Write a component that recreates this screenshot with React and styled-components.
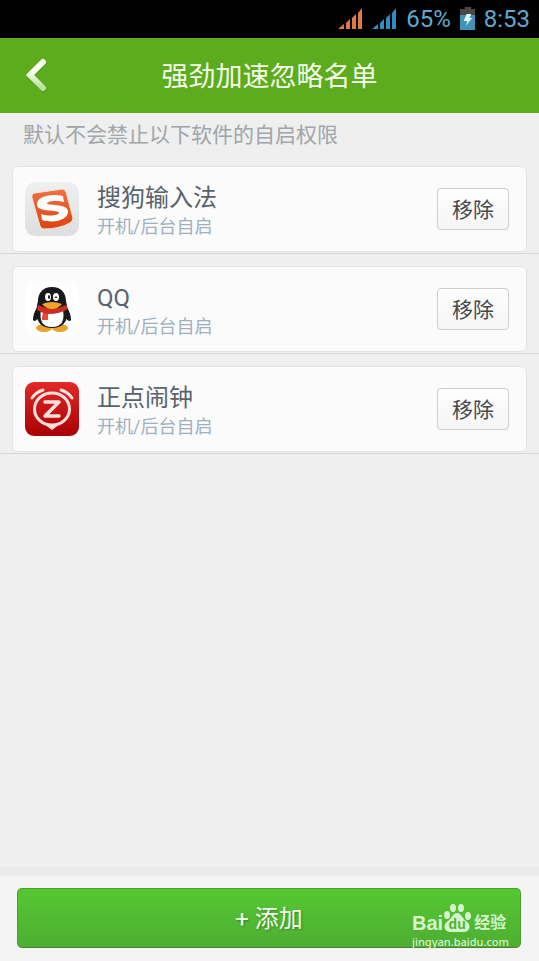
import React, { useState } from 'react'
import styled, { createGlobalStyle } from 'styled-components';

const GlobalStyle = createGlobalStyle`
  * {
    box-sizing: border-box;
  }
  body {
    margin: 0;
    background: #efefef;
    font-family: Roboto, "Noto Sans CJK SC", sans-serif;
  }
  button {
    font-family: inherit;
    cursor: pointer;
  }
`
const Page = styled.div`
  display: flex;
  flex-direction: column;
  min-height: 100vh;
`
const StatusBar = styled.div`
  display: flex;
  align-items: center;
  justify-content: flex-end;
  gap: 9px;
  height: 38px;
  padding-right: 9px;
  background: #000;
  color: #5fa9d0;
  font-size: 24px;
  line-height: 38px;
`
const Header = styled.header`
  display: grid;
  grid-template-columns: 72px 1fr 72px;
  align-items: center;
  height: 75px;
  background: #5cac1e;
`
const BackButton = styled.button`
  display: flex;
  align-items: center;
  justify-content: center;
  height: 75px;
  padding: 0;
  border: 0;
  background: none;
`
const Title = styled.h1`
  margin: 0;
  padding-top: 2px;
  color: #f6ffe9;
  font-size: 27px;
  font-weight: 400;
  line-height: 42px;
  text-align: center;
`
const Main = styled.main`
  flex: 1;
  border-top: 1px solid #f4f8ef;
`
const Hint = styled.p`
  height: 40px;
  margin: 0;
  padding: 6px 23px;
  color: #a0a5aa;
  font-size: 21px;
  line-height: 30px;
`
const List = styled.ul`
  margin: 0;
  padding: 0;
  list-style: none;
`
const Row = styled.li`
  padding: 12px 12px 1px;
  border-bottom: 1px solid #d6d8da;
`
const Card = styled.div`
  display: flex;
  align-items: center;
  height: 86px;
  padding: 0 17px 0 12px;
  border: 1px solid #e3e4e6;
  border-radius: 6px;
  background: #fbfbfb;
`
const AppIcon = styled.svg`
  flex: none;
  width: 54px;
  height: 54px;
`
const Info = styled.div`
  flex: 1;
  padding: 3px 0 0 18px;
`
const Name = styled.div`
  color: #59636d;
  font-size: 24px;
  line-height: 32px;
`
const Detail = styled.div`
  color: #a0afbe;
  font-size: 18px;
  line-height: 26px;
`
const RemoveButton = styled.button`
  width: 72px;
  height: 42px;
  padding: 2px 0 0;
  border: 1px solid #ccced0;
  border-radius: 4px;
  background: linear-gradient(#fefefe, #f5f5f6);
  color: #45484c;
  font-size: 21px;
  line-height: 30px;
`
const Footer = styled.footer`
  position: relative;
  padding: 12px 18px 13px 17px;
  background: #f4f4f4;
  box-shadow: 0 -9px 0 #eaeaea;
`
const AddButton = styled.button`
  display: block;
  width: 100%;
  height: 60px;
  padding: 2px 0 0;
  border: 1px solid #47a02b;
  border-bottom-color: #43842f;
  border-radius: 5px;
  background: linear-gradient(#56c733, #4eae31);
  color: #f3ffe9;
  font-size: 24px;
  line-height: 36px;
  text-shadow: 1px 1px 2px #39802a;
`
const Watermark = styled.div`
  position: absolute;
  right: 30px;
  bottom: 12px;
  color: #d5f3cb;
  pointer-events: none;
`
const Brand = styled.div`
  display: flex;
  align-items: flex-end;
  font-family: "Liberation Sans", "Noto Sans CJK SC", sans-serif;
  font-size: 20px;
  font-weight: 700;
  line-height: 20px;
`
const BrandCn = styled.span`
  padding-left: 3px;
  font-size: 16px;
`
const Paw = styled.span`
  position: relative;
  width: 28px;
  height: 30px;
`
const Du = styled.span`
  position: absolute;
  right: 0;
  bottom: 0;
  left: 0;
  color: #50b432;
  font-size: 14px;
  line-height: 18px;
  text-align: center;
`
const Site = styled.div`
  padding-top: 2px;
  font-family: "Noto Sans", sans-serif;
  font-size: 11px;
  font-weight: 500;
  line-height: 14px;
`

const Signal = ({ color }) => (
  <svg width="25" height="24" viewBox="0 0 25 24" fill={color} aria-hidden="true">
    <path d="M0 22l6-5v5zM8 22v-6l4-4v10zM14 22V11l4-4v15zM20 22V6l4-5v21z" />
  </svg>
)

const Battery = () => (
  <svg width="15" height="24" viewBox="0 0 16 24" preserveAspectRatio="none" aria-hidden="true">
    <path d="M5 0h7v2h4v6H0V2h5z" fill="#4b4748" />
    <path d="M0 8h16v15H0z" fill="#3d94b7" />
    <path d="M7 7h5l-2 4h3l-7 8 2-5H4z" fill="#e9fbff" />
  </svg>
)

const BackIcon = () => (
  <svg width="22" height="36" viewBox="0 0 22 36" fill="none" aria-hidden="true">
    <defs>
      <linearGradient id="back" x1="0" y1="0" x2="0" y2="1">
        <stop offset="0.35" stopColor="#fbfff5" />
        <stop offset="1" stopColor="#b9df9a" />
      </linearGradient>
    </defs>
    <path d="M19 5L5 18l14 14" stroke="#468c16" strokeWidth="6" strokeLinecap="round" opacity="0.4" />
    <path d="M18 4L5 17l13 13" stroke="url(#back)" strokeWidth="6" strokeLinecap="round" />
  </svg>
)

const SogouIcon = () => (
  <AppIcon viewBox="0 0 54 54" aria-hidden="true">
    <defs>
      <linearGradient id="sogouBg" x1="0" y1="0" x2="0" y2="1">
        <stop offset="0" stopColor="#eff0f1" />
        <stop offset="1" stopColor="#dcdee0" />
      </linearGradient>
      <linearGradient id="sogou" x1="0" y1="0" x2="0" y2="1">
        <stop offset="0" stopColor="#ef7340" />
        <stop offset="1" stopColor="#dc4312" />
      </linearGradient>
    </defs>
    <rect width="54" height="54" rx="10" fill="url(#sogouBg)" />
    <path d="M10 11L37 7q3 0 4 3l7 26q0 3-3 5-11 6-26 6-3 0-4-3L7 16q-1-4 3-5z" fill="url(#sogou)" stroke="#f9e1d8" strokeWidth="1" />
    <path
      d="M38 14l1 6c-8-2-16-1-17 1-1 3 20 0 21 8 1 8-13 13-26 9l-1-6c9 3 18 1 18-1 0-4-21 0-22-8-1-8 13-12 26-9z"
      fill="#fff"
    />
  </AppIcon>
)

const QQIcon = () => (
  <AppIcon viewBox="0 0 54 54" aria-hidden="true">
    <rect width="54" height="54" rx="10" fill="#fefefe" />
    <ellipse cx="19" cy="46" rx="8" ry="4" fill="#eba229" />
    <ellipse cx="35" cy="46" rx="8" ry="4" fill="#eba229" />
    <path d="M13 24q-5 7-5 14 2 3 6-3zM41 24q5 7 5 14-2 3-6-3z" fill="#171819" />
    <path d="M27 5c-9 0-14 6-14 14-3 12-3 27 14 27s17-15 14-27c0-8-5-14-14-14z" fill="#171819" />
    <path d="M16 28q-3 17 11 17t11-17q-11 4-22 0z" fill="#fff" />
    <ellipse cx="23" cy="15" rx="3" ry="4" fill="#fff" />
    <ellipse cx="31" cy="15" rx="3" ry="4" fill="#fff" />
    <ellipse cx="24" cy="15" rx="1" ry="2" fill="#171819" />
    <path d="M30 16q1-3 2 0" fill="none" stroke="#171819" strokeWidth="1" />
    <path d="M13 23q14 7 28 0l2 4q-8 5-20 5v6h-6l1-7-6-3z" fill="#cd2d24" />
    <path d="M18 31l5 1v6h-6z" fill="#ec4637" />
    <path d="M17 22q10-4 20 0-4 5-10 5t-10-5z" fill="#f0a42b" />
  </AppIcon>
)

const ClockIcon = () => (
  <AppIcon viewBox="0 0 54 54" aria-hidden="true">
    <defs>
      <linearGradient id="clock" x1="0" y1="0" x2="0" y2="1">
        <stop offset="0" stopColor="#e22926" />
        <stop offset="1" stopColor="#a90004" />
      </linearGradient>
    </defs>
    <rect width="54" height="54" rx="9" fill="url(#clock)" />
    <g fill="none" stroke="#ffdfdc" strokeLinecap="round" strokeLinejoin="round">
      <ellipse cx="27" cy="27" rx="17.5" ry="16" strokeWidth="3" />
      <path d="M7 16q4-6 11-8M36 8q7 2 11 8" strokeWidth="3" />
      <path d="M20 20h14L20 34h14" strokeWidth="3.5" />
    </g>
    <path d="M19 42h16l-8 6z" fill="#ffdfdc" />
  </AppIcon>
)

const icons = {
  sogou: SogouIcon,
  qq: QQIcon,
  clock: ClockIcon
}

const initialApps = [
  { id: 'sogou', name: '搜狗输入法' },
  { id: 'qq', name: 'QQ' },
  { id: 'clock', name: '正点闹钟' }
]

const AppRow = ({ app, onRemove }) => {
  const Icon = icons[app.id]

  return (
    <Row>
      <Card>
        <Icon />
        <Info>
          <Name>{app.name}</Name>
          <Detail>开机/后台自启</Detail>
        </Info>
        <RemoveButton type='button' onClick={() => onRemove(app.id)}>移除</RemoveButton>
      </Card>
    </Row>
  )
}

const App = () => {
  const [apps, setApps] = useState(initialApps);

  const handleRemove = (id) => {
    setApps(apps.filter((app) => app.id !== id))
  }

  return (
    <>
      <GlobalStyle />
      <Page>
        <StatusBar>
          <Signal color='#e07a3e' />
          <Signal color='#2f8cc4' />
          <span>65%</span>
          <Battery />
          <span>8:53</span>
        </StatusBar>
        <Header>
          <BackButton type='button' aria-label='返回'>
            <BackIcon />
          </BackButton>
          <Title>强劲加速忽略名单</Title>
        </Header>
        <Main>
          <Hint>默认不会禁止以下软件的自启权限</Hint>
          <List>
            {apps.map((app) => (
              <AppRow key={app.id} app={app} onRemove={handleRemove} />
            ))}
          </List>
        </Main>
        <Footer>
          <AddButton type='button'>+ 添加</AddButton>
          <Watermark>
            <Brand>
              <span>Bai</span>
              <Paw>
                <svg width="28" height="30" viewBox="0 0 28 30" fill="#d5f3cb" aria-hidden="true">
                  <ellipse cx="4" cy="12" rx="3" ry="4" />
                  <ellipse cx="10" cy="5" rx="3" ry="4" />
                  <ellipse cx="18" cy="5" rx="3" ry="4" />
                  <ellipse cx="25" cy="13" rx="3" ry="4" />
                  <path d="M14 10c4 0 5 5 9 8 6 4 4 11-3 11H8c-7 0-9-7-3-11 4-3 5-8 9-8z" />
                </svg>
                <Du>du</Du>
              </Paw>
              <BrandCn>经验</BrandCn>
            </Brand>
            <Site>jingyan.baidu.com</Site>
          </Watermark>
        </Footer>
      </Page>
    </>
  )
}

export default App
